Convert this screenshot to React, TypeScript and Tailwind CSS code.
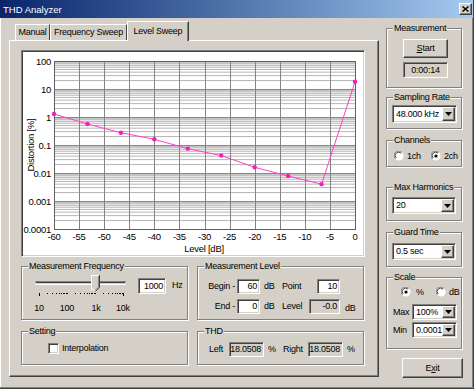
import React from "react";

const sunken =
  "border border-t-[#808080] border-l-[#808080] border-b-white border-r-white shadow-[inset_1px_1px_0_#404040,inset_-1px_-1px_0_#d4d0c8]";
const raised =
  "border border-t-white border-l-white border-b-[#404040] border-r-[#404040] shadow-[inset_-1px_-1px_0_#808080]";

function Group({
  label,
  className = "",
  children,
}: {
  label: string;
  className?: string;
  children?: React.ReactNode;
}) {
  return (
    <fieldset
      className={`border border-[#808080] shadow-[inset_1px_1px_0_#fff,1px_1px_0_#fff] min-w-0 ${className}`}
    >
      <legend className="ml-[6px] px-[1px] bg-[#d4d0c8] leading-[11px]">{label}</legend>
      {children}
    </fieldset>
  );
}

function Combo({ value, className = "" }: { value: string; className?: string }) {
  return (
    <div className={`${sunken} bg-white flex items-stretch p-[1px] ${className}`}>
      <span className="flex-1 pl-[2px] flex items-center overflow-hidden whitespace-nowrap">{value}</span>
      <div className={`${raised} bg-[#d4d0c8] w-[13px] flex items-center justify-center`}>
        <svg width="7" height="4" viewBox="0 0 7 4">
          <path d="M0 0h7L3.5 4z" fill="#000" />
        </svg>
      </div>
    </div>
  );
}

function Radio({ checked }: { checked?: boolean }) {
  return (
    <svg width="10" height="10" viewBox="0 0 10 10">
      <circle cx="5" cy="5" r="4.5" fill="#fff" />
      <path d="M1.3 7.8A4.3 4.3 0 0 1 7.8 1.3" stroke="#808080" strokeWidth="1" fill="none" />
      <path d="M2.2 7A3.2 3.2 0 0 1 7 2.2" stroke="#404040" strokeWidth="1" fill="none" />
      {checked && <circle cx="5" cy="5" r="1.6" fill="#000" />}
    </svg>
  );
}

function Box({ children, gray, className = "" }: { children?: React.ReactNode; gray?: boolean; className?: string }) {
  return (
    <div
      className={`${sunken} ${gray ? "bg-[#d4d0c8]" : "bg-white"} flex items-center justify-end pr-[2px] ${className}`}
    >
      {children}
    </div>
  );
}

const X0 = 32;
const X1 = 333;
const Y0 = 10;
const DEC = 28;
const xOf = (db: number) => X0 + ((db + 60) / 60) * (X1 - X0);
const yOf = (v: number) => Y0 + (2 - Math.log10(v)) * DEC;

const data = [1.28, 0.56, 0.275, 0.16, 0.074, 0.042, 0.016, 0.0078, 0.004, 18.05];

function Chart() {
  const vlines = Array.from({ length: 13 }, (_, i) => xOf(-60 + i * 5));
  const decLines = Array.from({ length: 7 }, (_, i) => Y0 + i * DEC);
  const minor: number[] = [];
  for (let d = 0; d < 6; d++) {
    const bottom = Y0 + (d + 1) * DEC;
    for (let k = 2; k <= 9; k++) minor.push(bottom - DEC * Math.log10(k));
  }
  const pts = data.map((v, i) => [xOf(-60 + (i * 60) / 9), yOf(v)] as const);
  const yLabels = ["100", "10", "1", "0.1", "0.01", "0.001", "0.0001"];
  const xLabels = [-60, -55, -50, -45, -40, -35, -30, -25, -20, -15, -10, -5, 0];
  return (
    <svg width="342" height="205" viewBox="0 0 342 205" style={{ fontFamily: "'Liberation Sans', Arial, sans-serif" }}>
      {minor.map((y, i) => (
        <line key={"m" + i} x1={X0} x2={X1} y1={y} y2={y} stroke="#b4b4b4" strokeWidth="1" />
      ))}
      {decLines.map((y, i) => (
        <line key={"d" + i} x1={X0} x2={X1} y1={y + 0.5} y2={y + 0.5} stroke="#888" strokeWidth="1" />
      ))}
      {vlines.map((x, i) => (
        <line key={"v" + i} x1={Math.round(x) + 0.5} x2={Math.round(x) + 0.5} y1={Y0} y2={Y0 + 6 * DEC} stroke="#848484" strokeWidth="1" />
      ))}
      <rect x={X0 + 0.5} y={Y0 + 0.5} width={X1 - X0} height={6 * DEC} fill="none" stroke="#606060" strokeWidth="1" />
      <polyline points={pts.map((p) => p.join(",")).join(" ")} fill="none" stroke="#ff40c8" strokeWidth="1" />
      {pts.map((p, i) => (
        <circle key={"p" + i} cx={p[0]} cy={p[1]} r="2.2" fill="#f020b8" />
      ))}
      {yLabels.map((t, i) => (
        <text key={"yl" + i} x={29} y={Y0 + i * DEC + 3.5} fontSize="9.5" textAnchor="end" fill="#000">
          {t}
        </text>
      ))}
      {xLabels.map((v, i) => (
        <text key={"xl" + i} x={xOf(v)} y={189} fontSize="9.5" textAnchor="middle" fill="#000">
          {v}
        </text>
      ))}
      <text x={182} y={201} fontSize="9.5" textAnchor="middle" fill="#000">
        Level [dB]
      </text>
      <text
        x={0}
        y={0}
        fontSize="9.5"
        textAnchor="middle"
        dominantBaseline="central"
        fill="#000"
        transform="translate(8 94) rotate(-90)"
      >
        Distortion [%]
      </text>
    </svg>
  );
}

function Slider() {
  const ticks: number[] = [];
  for (let d = 0; d < 3; d++) for (let k = 1; k <= 9; k++) ticks.push(11 + 28 * (d + Math.log10(k)));
  ticks.push(95);
  return (
    <svg width="106" height="44" viewBox="0 0 106 44" style={{ fontFamily: "'Liberation Sans', Arial, sans-serif" }}>
      <line x1="7" x2="98" y1="9.5" y2="9.5" stroke="#808080" />
      <line x1="8" x2="97" y1="10.5" y2="10.5" stroke="#404040" />
      <line x1="8" x2="97" y1="11.5" y2="11.5" stroke="#d4d0c8" />
      <line x1="7" x2="98" y1="12.5" y2="12.5" stroke="#fff" />
      <path d="M63 3h8v12l-4 4l-4-4z" fill="#d4d0c8" />
      <path d="M63.5 18.5V3.5h8" fill="none" stroke="#fff" />
      <path d="M71.5 3v12.3L67.3 19.5" fill="none" stroke="#404040" />
      <path d="M70.5 4v11L67 18.5" fill="none" stroke="#808080" />
      <path d="M63.5 15.3L67 18.8" fill="none" stroke="#fff" />
      {ticks.map((x, i) => (
        <line
          key={i}
          x1={Math.round(x) + 0.5}
          x2={Math.round(x) + 0.5}
          y1={21}
          y2={i === 0 || i === ticks.length - 1 ? 24 : 22}
          stroke="#000"
        />
      ))}
      <text x="11" y="38.5" fontSize="9" textAnchor="middle">10</text>
      <text x="39" y="38.5" fontSize="9" textAnchor="middle">100</text>
      <text x="68" y="38.5" fontSize="9" textAnchor="middle">1k</text>
      <text x="95" y="38.5" fontSize="9" textAnchor="middle">10k</text>
    </svg>
  );
}

export default function App() {
  return (
    <div className="w-[474px] h-[389px] bg-[#d4d0c8] flex flex-col overflow-hidden border-r border-b border-r-[#404040] border-b-[#404040] shadow-[inset_-1px_-1px_0_#808080,inset_1px_0_0_#fff] font-['Liberation_Sans',Arial,sans-serif] text-[9px] leading-[11px] tracking-[-0.25px] text-black select-none">
      {/* title bar */}
      <div className="h-[18px] flex items-center bg-gradient-to-r from-[#0a246a] to-[#a6caf0]">
        <span className="pl-[3px] text-white text-[9.5px] tracking-[0px]">THD Analyzer</span>
        <div className={`${raised} ml-auto mr-[1px] w-[13px] h-[12px] bg-[#d4d0c8] flex items-center justify-center`}>
          <svg width="7" height="6" viewBox="0 0 7 6">
            <path d="M0.5 0.5L6.5 5.5M6.5 0.5L0.5 5.5" stroke="#000" strokeWidth="1.5" />
          </svg>
        </div>
      </div>

      <div className="flex">
        {/* left: tabs + panel */}
        <div className="ml-[9px] mt-[3px] w-[370px] flex flex-col">
          <div className="h-[19px] flex items-end pl-[6px]">
            <div className="h-[16px] w-[35px] border-t border-l border-white border-r border-r-[#404040] flex items-center justify-center">
              Manual
            </div>
            <div className="h-[16px] w-[77px] border-t border-l border-white border-r border-r-[#404040] flex items-center justify-center">
              Frequency Sweep
            </div>
            <div className="relative z-10 -mb-[1px] h-[20px] w-[62px] bg-[#d4d0c8] border-t border-l border-white border-r border-r-[#404040] shadow-[inset_-1px_0_0_#808080] flex items-center justify-center pb-[1px]">
              Level Sweep
            </div>
          </div>
          <div className="h-[337px] border border-t-white border-l-white border-r-[#404040] border-b-[#404040] shadow-[inset_-1px_-1px_0_#808080] flex flex-col">
            <div className={`ml-[11px] mt-[9px] w-[344px] h-[207px] bg-white ${sunken}`}>
              <Chart />
            </div>
            <div className="ml-[11px] mt-[4px] flex gap-[9px]">
              <Group label="Measurement Frequency" className="w-[167px] h-[59px]">
                <div className="flex items-start">
                  <div className="ml-[6px]">
                    <Slider />
                  </div>
                  <Box className="ml-[4px] mt-[6px] w-[28px] h-[16px]">1000</Box>
                  <span className="ml-[6px] mt-[8px]">Hz</span>
                </div>
              </Group>
              <Group label="Measurement Level" className="w-[167px] h-[59px]">
                <div className="flex flex-col mt-[7px] gap-[5px]">
                  <div className="flex items-center h-[15px]">
                    <span className="w-[39px] text-right pr-[2px]">Begin -</span>
                    <Box className="w-[23px] h-[15px]">60</Box>
                    <span className="w-[22px] pl-[4px]">dB</span>
                    <span className="w-[35px]">Point</span>
                    <Box className="w-[23px] h-[15px]">10</Box>
                  </div>
                  <div className="flex items-center h-[15px]">
                    <span className="w-[39px] text-right pr-[2px]">End -</span>
                    <Box className="w-[23px] h-[15px]">0</Box>
                    <span className="w-[22px] pl-[4px]">dB</span>
                    <span className="w-[27px]">Level</span>
                    <Box gray className="w-[31px] h-[15px]">-0.0</Box>
                    <span className="ml-[5px] mt-[3px]">dB</span>
                  </div>
                </div>
              </Group>
            </div>
            <div className="ml-[11px] mt-[6px] flex gap-[9px]">
              <Group label="Setting" className="w-[167px] h-[39px]">
                <div className="flex items-center ml-[26px] mt-[6px]">
                  <div className={`${sunken} w-[11px] h-[11px] bg-white`} />
                  <span className="ml-[3px]">Interpolation</span>
                </div>
              </Group>
              <Group label="THD" className="w-[167px] h-[39px]">
                <div className="flex items-center ml-[11px] mt-[5px] h-[15px]">
                  <span className="w-[20px]">Left</span>
                  <Box gray className="w-[35px] h-[15px]">18.0508</Box>
                  <span className="w-[19px] pl-[4px]">%</span>
                  <span className="w-[25px]">Right</span>
                  <Box gray className="w-[35px] h-[15px]">18.0508</Box>
                  <span className="pl-[4px]">%</span>
                </div>
              </Group>
            </div>
          </div>
        </div>

        {/* right column */}
        <div className="ml-[7px] w-[76px] flex flex-col">
          <Group label="Measurement" className="mt-[5px] h-[65px]">
            <div className="flex flex-col items-start ml-[16px] mt-[5px]">
              <div className={`${raised} w-[45px] h-[19px] flex items-center justify-center`}>
                <span>
                  <span className="underline">S</span>tart
                </span>
              </div>
              <div className={`${sunken} mt-[4px] w-[45px] h-[16px] flex items-center justify-center`}>0:00:14</div>
            </div>
          </Group>
          <Group label="Sampling Rate" className="mt-[4px] h-[37px]">
            <Combo value="48.000 kHz" className="ml-[5px] mt-[2px] w-[65px] h-[18px]" />
          </Group>
          <Group label="Channels" className="mt-[6px] h-[32px]">
            <div className="flex items-center ml-[7px] mt-[4px] h-[12px]">
              <Radio />
              <span className="ml-[3px] w-[24px]">1ch</span>
              <Radio checked />
              <span className="ml-[3px]">2ch</span>
            </div>
          </Group>
          <Group label="Max Harmonics" className="mt-[15px] h-[39px]">
            <Combo value="20" className="ml-[5px] mt-[4px] w-[64px] h-[17px]" />
          </Group>
          <Group label="Guard Time" className="mt-[6px] h-[40px]">
            <Combo value="0.5 sec" className="ml-[5px] mt-[5px] w-[64px] h-[17px]" />
          </Group>
          <Group label="Scale" className="mt-[5px] h-[77px]">
            <div className="flex items-center ml-[14px] mt-[3px] h-[12px]">
              <Radio checked />
              <span className="ml-[5px] w-[20px]">%</span>
              <Radio />
              <span className="ml-[3px]">dB</span>
            </div>
            <div className="flex items-center ml-[6px] mt-[6px]">
              <span className="w-[19px]">Max</span>
              <Combo value="100%" className="w-[45px] h-[16px]" />
            </div>
            <div className="flex items-center ml-[6px] mt-[2px]">
              <span className="w-[19px]">Min</span>
              <Combo value="0.0001" className="w-[45px] h-[16px]" />
            </div>
          </Group>
          <div className={`${raised} mt-[9px] ml-[16px] w-[61px] h-[20px] flex items-center justify-center`}>
            <span>
              E<span className="underline">x</span>it
            </span>
          </div>
        </div>
      </div>
    </div>
  );
}
